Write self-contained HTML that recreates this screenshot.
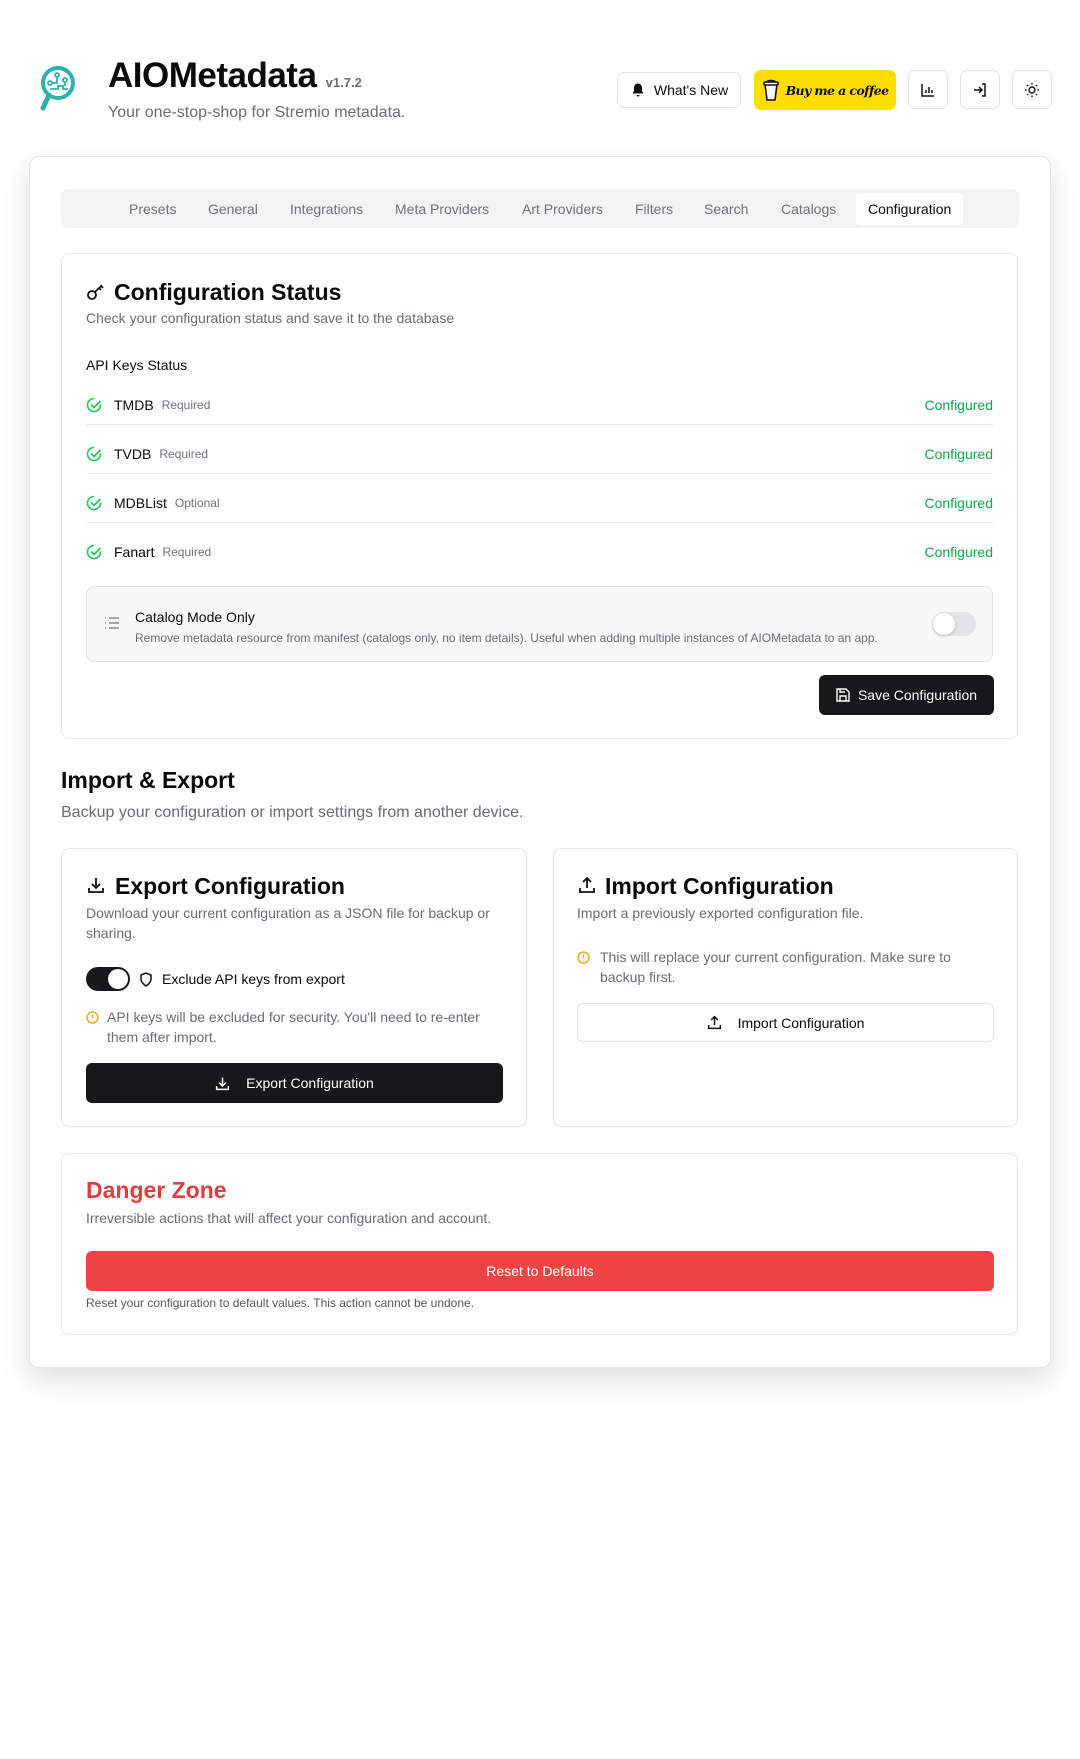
<!DOCTYPE html>
<html><head><meta charset="utf-8"><style>
*{box-sizing:border-box;margin:0;padding:0}
body{width:1080px;height:1759px;background:#fff;font-family:"Liberation Sans",sans-serif;color:#0a0a0a;position:relative;overflow:hidden}
.a{position:absolute}
.btn{position:absolute;border:1px solid #e4e4e7;border-radius:7px;background:#fff;display:flex;align-items:center;justify-content:center;white-space:nowrap}
.muted{color:#6b6b72}
.tab{position:absolute;top:200px;font-size:14px;color:#71717a;line-height:18px}
.box{position:absolute;border:1px solid #e6e6e8;border-radius:8px;background:#fff}
.row{position:absolute;left:86px;width:907px;height:20px;font-size:14px;display:flex;align-items:center}
.row svg{margin-right:12px}
.req{font-size:12px;color:#71717a;margin-left:8px}
.conf{position:absolute;right:0;color:#16a34a;font-size:14px}
.hr{position:absolute;left:86px;width:907px;height:1px;background:#e8e8ea}
h2{font-size:23px;font-weight:bold;position:absolute;line-height:28px}
</style></head><body>

<svg class="a" style="left:38px;top:64px" width="44" height="52" viewBox="0 0 44 52">
<circle cx="20" cy="19" r="15" fill="none" stroke="#2bb3a7" stroke-width="4"/>
<line x1="11" y1="31" x2="5" y2="44" stroke="#2bb3a7" stroke-width="5" stroke-linecap="round"/>
<g fill="none" stroke="#2bb3a7" stroke-width="1.8"><circle cx="12" cy="19" r="2"/><circle cx="19" cy="11" r="2"/><circle cx="27" cy="16" r="2"/><path d="M14 19h5v-6M12 25h8v-3h5v3h5M27 18v4"/></g>
</svg>
<div class="a" style="left:108px;top:56px;font-size:35px;font-weight:bold;letter-spacing:-0.5px">AIOMetadata <span style="font-size:13px;color:#6b6b72;letter-spacing:0">v1.7.2</span></div>
<div class="a muted" style="left:108px;top:104px;font-size:16px">Your one-stop-shop for Stremio metadata.</div>

<div class="btn" style="left:617px;top:72px;width:124px;height:36px;font-size:14px"><svg width="16" height="16" viewBox="0 0 16 16" style="margin-right:8px"><path d="M8 1.5c-2.5 0-4 2-4 4.5v3L2.5 11.5h11L12 9V6c0-2.5-1.5-4.5-4-4.5z" fill="#111"/><path d="M6.5 13a1.5 1.5 0 003 0z" fill="#111"/></svg>What's New</div>
<div class="btn" style="left:754px;top:70px;width:142px;height:40px;background:#ffdd00;border-color:#ffdd00;font-family:'DejaVu Serif',serif;font-style:italic;font-size:12.5px;font-weight:bold;letter-spacing:-0.6px"><svg width="18" height="24" viewBox="0 0 18 24" style="margin-right:6px"><path d="M3 6h12l-2 16H5z" fill="#fff" stroke="#111" stroke-width="1.6"/><rect x="2" y="4" width="14" height="3" rx="1" fill="#fff" stroke="#111" stroke-width="1.6"/><path d="M5 4c0-2 8-2 8 0" fill="none" stroke="#111" stroke-width="1.6"/></svg>Buy me a coffee</div>
<div class="btn" style="left:908px;top:70px;width:40px;height:39px"><svg width="16" height="16" viewBox="0 0 16 16" fill="none" stroke="#111" stroke-width="1.5"><path d="M2 2v12h12M6 11V8M9 11V5M12 11V8"/></svg></div>
<div class="btn" style="left:960px;top:70px;width:40px;height:39px"><svg width="16" height="16" viewBox="0 0 16 16" fill="none" stroke="#111" stroke-width="1.5"><path d="M2 8h8M7 5l3 3-3 3M10 2h3v12h-3"/></svg></div>
<div class="btn" style="left:1012px;top:70px;width:40px;height:39px"><svg width="16" height="16" viewBox="0 0 16 16" fill="none" stroke="#111" stroke-width="1.4"><circle cx="8" cy="8" r="3"/><path d="M8 1v1.5M8 13.5V15M1 8h1.5M13.5 8H15M3 3l1 1M12 12l1 1M3 13l1-1M12 4l1-1"/></svg></div>

<div class="a" style="left:29px;top:156px;width:1022px;height:1212px;border:1px solid #e6e6e8;border-radius:10px;background:#fff;box-shadow:0 12px 30px rgba(0,0,0,0.13)"></div>

<div class="a" style="left:61px;top:189px;width:958px;height:39px;background:#f3f3f4;border-radius:7px"></div>
<div class="tab" style="left:129px">Presets</div>
<div class="tab" style="left:208px">General</div>
<div class="tab" style="left:290px">Integrations</div>
<div class="tab" style="left:395px">Meta Providers</div>
<div class="tab" style="left:522px">Art Providers</div>
<div class="tab" style="left:635px">Filters</div>
<div class="tab" style="left:704px">Search</div>
<div class="tab" style="left:781px">Catalogs</div>
<div class="a" style="left:856px;top:193px;width:107px;height:32px;background:#fff;border-radius:4px"></div>
<div class="tab" style="left:868px;color:#0a0a0a">Configuration</div>

<div class="box" style="left:61px;top:253px;width:957px;height:486px"></div>
<svg class="a" style="left:86px;top:282px" width="20" height="20" viewBox="0 0 20 20" fill="none" stroke="#111" stroke-width="1.8"><circle cx="6" cy="13" r="4"/><path d="M9 10l7-7M13 6l2 2M15 4l2 2"/></svg>
<h2 style="left:114px;top:278px">Configuration Status</h2>
<div class="a muted" style="left:86px;top:310px;font-size:14px">Check your configuration status and save it to the database</div>
<div class="a" style="left:86px;top:357px;font-size:14px">API Keys Status</div>

<div class="row" style="top:395px"><svg width="16" height="16" viewBox="0 0 16 16" fill="none" stroke="#22c55e" stroke-width="1.6"><path d="M14.5 7.5A6.5 6.5 0 118 1.5"/><path d="M5 7.5l3 3 6.5-6.5"/></svg>TMDB<span class="req">Required</span><span class="conf">Configured</span></div>
<div class="hr" style="top:424px"></div>
<div class="row" style="top:444px"><svg width="16" height="16" viewBox="0 0 16 16" fill="none" stroke="#22c55e" stroke-width="1.6"><path d="M14.5 7.5A6.5 6.5 0 118 1.5"/><path d="M5 7.5l3 3 6.5-6.5"/></svg>TVDB<span class="req">Required</span><span class="conf">Configured</span></div>
<div class="hr" style="top:473px"></div>
<div class="row" style="top:493px"><svg width="16" height="16" viewBox="0 0 16 16" fill="none" stroke="#22c55e" stroke-width="1.6"><path d="M14.5 7.5A6.5 6.5 0 118 1.5"/><path d="M5 7.5l3 3 6.5-6.5"/></svg>MDBList<span class="req">Optional</span><span class="conf">Configured</span></div>
<div class="hr" style="top:522px"></div>
<div class="row" style="top:542px"><svg width="16" height="16" viewBox="0 0 16 16" fill="none" stroke="#22c55e" stroke-width="1.6"><path d="M14.5 7.5A6.5 6.5 0 118 1.5"/><path d="M5 7.5l3 3 6.5-6.5"/></svg>Fanart<span class="req">Required</span><span class="conf">Configured</span></div>

<div class="a" style="left:86px;top:586px;width:907px;height:76px;border:1px solid #e6e6e8;border-radius:8px;background:#f8f8f9"></div>
<svg class="a" style="left:104px;top:616px" width="16" height="14" viewBox="0 0 16 14" stroke="#888" stroke-width="1.4"><path d="M1 2h1M5 2h10M1 7h1M5 7h10M1 12h1M5 12h10"/></svg>
<div class="a" style="left:135px;top:609px;font-size:14px">Catalog Mode Only</div>
<div class="a muted" style="left:135px;top:631px;font-size:12px">Remove metadata resource from manifest (catalogs only, no item details). Useful when adding multiple instances of AIOMetadata to an app.</div>
<div class="a" style="left:932px;top:612px;width:44px;height:24px;border-radius:12px;background:#e4e4e7"></div>
<div class="a" style="left:933px;top:613px;width:22px;height:22px;border-radius:11px;background:#fff;box-shadow:0 1px 3px rgba(0,0,0,.2)"></div>

<div class="a" style="left:819px;top:675px;width:175px;height:40px;background:#18181b;border-radius:6px;color:#fff;font-size:14px;display:flex;align-items:center;justify-content:center"><svg width="14" height="14" viewBox="0 0 14 14" fill="none" stroke="#fff" stroke-width="1.4" style="margin-right:8px"><path d="M1 1h9l3 3v9H1z"/><path d="M4 13V8h6v5M4 1v3h5"/></svg>Save Configuration</div>

<div class="a" style="left:61px;top:767px;font-size:23px;font-weight:bold">Import &amp; Export</div>
<div class="a muted" style="left:61px;top:804px;font-size:16px">Backup your configuration or import settings from another device.</div>

<div class="box" style="left:61px;top:848px;width:466px;height:279px"></div>
<svg class="a" style="left:87px;top:876px" width="18" height="18" viewBox="0 0 18 18" fill="none" stroke="#111" stroke-width="1.8"><path d="M9 2v10M5 8l4 4 4-4M2 12v4h14v-4"/></svg>
<h2 style="left:115px;top:872px">Export Configuration</h2>
<div class="a muted" style="left:86px;top:903px;width:420px;font-size:14px;line-height:20px">Download your current configuration as a JSON file for backup or sharing.</div>
<div class="a" style="left:86px;top:967px;width:44px;height:24px;border-radius:12px;background:#18181b"></div>
<div class="a" style="left:108px;top:969px;width:20px;height:20px;border-radius:10px;background:#fff"></div>
<svg class="a" style="left:139px;top:972px" width="14" height="15" viewBox="0 0 14 15" fill="none" stroke="#111" stroke-width="1.5"><path d="M7 1L2 3v4c0 3 2 5 5 7 3-2 5-4 5-7V3z"/></svg>
<div class="a" style="left:162px;top:971px;font-size:14px">Exclude API keys from export</div>
<svg class="a" style="left:86px;top:1011px" width="13" height="13" viewBox="0 0 13 13" fill="none" stroke="#f59e0b" stroke-width="1.3"><circle cx="6.5" cy="6.5" r="5.5"/><path d="M6.5 3.5v3.5M6.5 9v.5"/></svg>
<div class="a muted" style="left:107px;top:1007px;width:400px;font-size:14px;line-height:20px">API keys will be excluded for security. You'll need to re-enter them after import.</div>
<div class="a" style="left:86px;top:1063px;width:417px;height:40px;background:#18181b;border-radius:6px;color:#fff;font-size:14px;display:flex;align-items:center;justify-content:center"><svg width="15" height="15" viewBox="0 0 18 18" fill="none" stroke="#fff" stroke-width="1.8" style="margin-right:16px"><path d="M9 2v10M5 8l4 4 4-4M2 12v4h14v-4"/></svg>Export Configuration</div>

<div class="box" style="left:553px;top:848px;width:465px;height:279px"></div>
<svg class="a" style="left:578px;top:876px" width="18" height="18" viewBox="0 0 18 18" fill="none" stroke="#111" stroke-width="1.8"><path d="M9 12V2M5 6l4-4 4 4M2 12v4h14v-4"/></svg>
<h2 style="left:605px;top:872px">Import Configuration</h2>
<div class="a muted" style="left:577px;top:903px;font-size:14px;line-height:20px">Import a previously exported configuration file.</div>
<svg class="a" style="left:577px;top:951px" width="13" height="13" viewBox="0 0 13 13" fill="none" stroke="#f59e0b" stroke-width="1.3"><circle cx="6.5" cy="6.5" r="5.5"/><path d="M6.5 3.5v3.5M6.5 9v.5"/></svg>
<div class="a muted" style="left:600px;top:947px;width:380px;font-size:14px;line-height:20px">This will replace your current configuration. Make sure to backup first.</div>
<div class="a" style="left:577px;top:1003px;width:417px;height:39px;border:1px solid #e4e4e7;border-radius:6px;font-size:14px;display:flex;align-items:center;justify-content:center"><svg width="15" height="15" viewBox="0 0 18 18" fill="none" stroke="#111" stroke-width="1.8" style="margin-right:16px"><path d="M9 12V2M5 6l4-4 4 4M2 12v4h14v-4"/></svg>Import Configuration</div>

<div class="a" style="left:61px;top:1153px;width:957px;height:182px;border:1px solid #f4dede;border-radius:8px"></div>
<div class="a" style="left:86px;top:1177px;font-size:23px;font-weight:bold;color:#e03d3d">Danger Zone</div>
<div class="a muted" style="left:86px;top:1210px;font-size:14px">Irreversible actions that will affect your configuration and account.</div>
<div class="a" style="left:86px;top:1251px;width:908px;height:40px;background:#ef4444;border-radius:6px;color:#fff;font-size:14px;display:flex;align-items:center;justify-content:center">Reset to Defaults</div>
<div class="a" style="left:86px;top:1296px;font-size:12px;color:#555">Reset your configuration to default values. This action cannot be undone.</div>
</body></html>
